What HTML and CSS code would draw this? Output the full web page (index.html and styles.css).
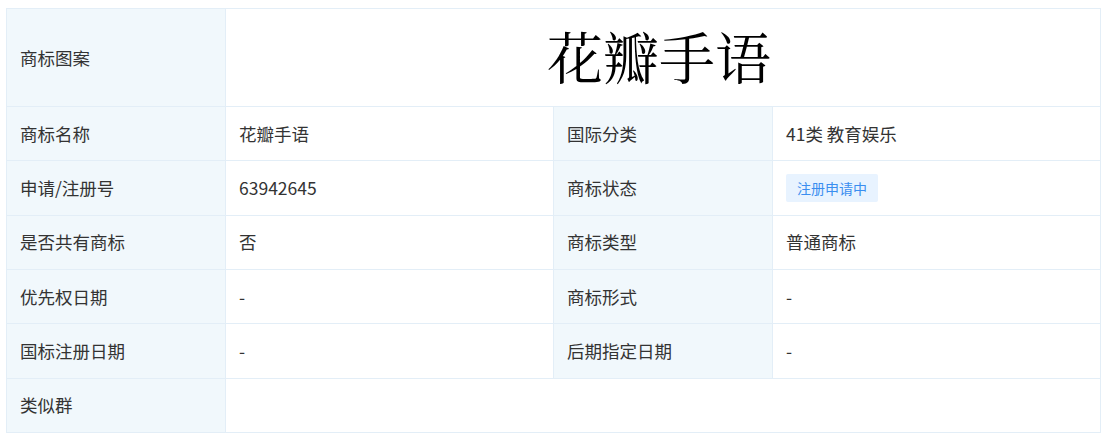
FILE: index.html
```html
<!DOCTYPE html>
<html lang="zh">
<head>
<meta charset="utf-8">
<link rel="stylesheet" href="styles.css">
</head>
<body>
<table class="info">
  <colgroup>
    <col class="c-label">
    <col class="c-value">
    <col class="c-label">
    <col class="c-value">
  </colgroup>
  <tr class="row-logo">
    <td class="label">商标图案</td>
    <td class="logo" colspan="3"><span class="logo-text">花瓣手语</span></td>
  </tr>
  <tr>
    <td class="label">商标名称</td>
    <td class="value">花瓣手语</td>
    <td class="label">国际分类</td>
    <td class="value">41类 教育娱乐</td>
  </tr>
  <tr>
    <td class="label">申请/注册号</td>
    <td class="value">63942645</td>
    <td class="label">商标状态</td>
    <td class="value"><span class="tag">注册申请中</span></td>
  </tr>
  <tr>
    <td class="label">是否共有商标</td>
    <td class="value">否</td>
    <td class="label">商标类型</td>
    <td class="value">普通商标</td>
  </tr>
  <tr>
    <td class="label">优先权日期</td>
    <td class="value">-</td>
    <td class="label">商标形式</td>
    <td class="value">-</td>
  </tr>
  <tr>
    <td class="label">国标注册日期</td>
    <td class="value">-</td>
    <td class="label">后期指定日期</td>
    <td class="value">-</td>
  </tr>
  <tr>
    <td class="label">类似群</td>
    <td class="value" colspan="3"></td>
  </tr>
</table>
</body>
</html>
```
FILE: styles.css
```css
html, body {
  margin: 0;
  padding: 0;
  background: #ffffff;
}
body {
  padding: 8px 0 0 6px;
  font-family: "Noto Sans CJK SC", "Noto Sans", sans-serif;
  color: #333333;
}
.info {
  border-collapse: collapse;
  table-layout: fixed;
  width: 1094px;
}
.c-label { width: 219px; }
.c-value { width: 328px; }
.info td {
  border: 1px solid #e3eef7;
  height: 54.33px;
  padding: 0 0 0 13px;
  font-size: 17.5px;
  line-height: 22px;
  vertical-align: middle;
  box-sizing: border-box;
}
.info td.label {
  background: #f1f8fc;
}
.row-logo td {
  height: 98px;
}
.info td.logo {
  text-align: center;
  padding: 0 8px 6px 0;
}
.logo-text {
  font-family: "Noto Serif CJK SC", "AR PL UMing CN", "Liberation Serif", serif;
  font-size: 56px;
  line-height: 60px;
  color: #000000;
  font-weight: 400;
}
.tag {
  display: inline-block;
  background: #e8f3ff;
  color: #3a8ef0;
  font-size: 14px;
  line-height: 28px;
  padding: 0 11px;
  border-radius: 2px;
}
```
